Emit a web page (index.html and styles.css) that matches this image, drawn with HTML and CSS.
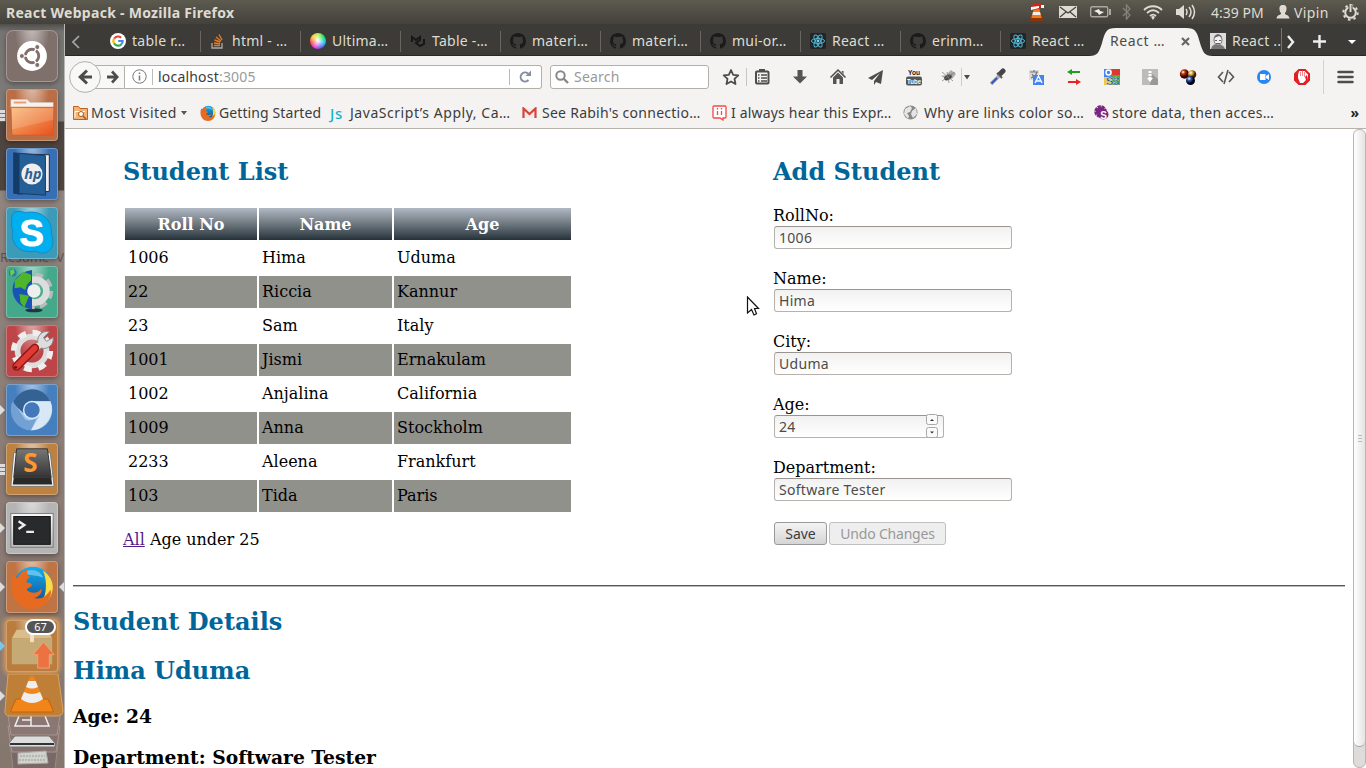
FILE: index.html
```html
<!DOCTYPE html>
<html lang="en">
<head>
<meta charset="utf-8">
<title>React Webpack</title>
<link rel="stylesheet" href="styles.css">
</head>
<body>
<svg class="defs" width="0" height="0" aria-hidden="true">
  <defs>
    <linearGradient id="orange" x1="0" y1="0" x2="1" y2="1"><stop offset="0" stop-color="#f8bb78"/><stop offset="1" stop-color="#e8501c"/></linearGradient>
    <linearGradient id="silver" x1="0" y1="0" x2="0" y2="1"><stop offset="0" stop-color="#fff"/><stop offset="1" stop-color="#bbb"/></linearGradient>
    <linearGradient id="key" x1="0" y1="0" x2="0" y2="1"><stop offset="0" stop-color="#777"/><stop offset="1" stop-color="#333"/></linearGradient>
    <linearGradient id="blue" x1="0" y1="0" x2="0" y2="1"><stop offset="0" stop-color="#14aef0"/><stop offset="1" stop-color="#114a8d"/></linearGradient>
    <radialGradient id="ballred" cx=".35" cy=".3"><stop offset="0" stop-color="#fff"/><stop offset=".4" stop-color="#c43a10"/><stop offset="1" stop-color="#300"/></radialGradient>
    <radialGradient id="ballblue" cx=".35" cy=".3"><stop offset="0" stop-color="#fff"/><stop offset=".4" stop-color="#3861b8"/><stop offset="1" stop-color="#001"/></radialGradient>
    <radialGradient id="ballgold" cx=".35" cy=".3"><stop offset="0" stop-color="#fff"/><stop offset=".4" stop-color="#edb23b"/><stop offset="1" stop-color="#420"/></radialGradient>
    <symbol id="github" viewBox="0 0 16 16"><path fill="#1b1b1b" d="M8 0C3.58 0 0 3.58 0 8c0 3.54 2.29 6.53 5.47 7.59.4.07.55-.17.55-.38v-1.49c-2.01.37-2.53-.49-2.69-.94-.09-.23-.48-.94-.82-1.13-.28-.15-.68-.52-.01-.53.63-.01 1.08.58 1.23.82.72 1.21 1.87.87 2.33.66.07-.52.28-.87.51-1.07-1.78-.2-3.64-.89-3.64-3.95 0-.87.31-1.59.82-2.15-.08-.2-.36-1.02.08-2.12 0 0 .67-.21 2.2.82a7.6 7.6 0 0 1 4 0c1.53-1.04 2.2-.82 2.2-.82.44 1.1.16 1.92.08 2.12.51.56.82 1.27.82 2.15 0 3.07-1.87 3.75-3.65 3.95.29.25.54.73.54 1.48v2.2c0 .21.15.46.55.38A8 8 0 0 0 16 8c0-4.42-3.58-8-8-8z"/></symbol>
    <symbol id="react" viewBox="0 0 16 16"><rect width="16" height="16" rx="2" fill="#222528"/><g fill="none" stroke="#53b4cf"><ellipse cx="8" cy="8" rx="6.6" ry="2.5"/><ellipse cx="8" cy="8" rx="6.6" ry="2.5" transform="rotate(60 8 8)"/><ellipse cx="8" cy="8" rx="6.6" ry="2.5" transform="rotate(120 8 8)"/></g><circle cx="8" cy="8" r="1.4" fill="#61dafb"/></symbol>
    <symbol id="firefox" viewBox="0 0 48 48"><circle cx="25" cy="23" r="21" fill="url(#blue)"/><path fill="#5fc1ed" d="M14 8c9-5 20-2 22 6-7-4-15-1-22-6z"/><path fill="#f7dc45" d="M36 6c9 6 12 15 10 23-2 9-9 15-15 17 8-10 11-24 5-40z"/><path fill="#e66a20" d="M4 10c2 2 3 4 4 5 2-5 6-8 11-10-1 4 0 7 3 8-3 2-4 4-4 6 3 0 6 1 6 3-1 2-5 3-6 5 5 5 13 4 16-1 2 5-4 9-8 10 8 2 14-2 18-9 3 7-6 21-20 21C4 48-3 25 4 10z"/></symbol>
  </defs>
</svg>

<div class="desktop">
  <header class="panel">
    <div class="panel-title">React Webpack - Mozilla Firefox</div>
    <div class="tray">
      <svg class="t-vlc" width="18" height="20" viewBox="0 0 18 20"><path fill="#f57a16" d="M6 6h5l3 11H3z"/><path fill="#eee" d="M5 10h7l.6 3H4.400z"/><path fill="#8a3409" d="M2 16h13v3H2z"/><path fill="#d9211a" d="M3 5C5 0 12-1 15 4l-3 1-1 2-7 1z"/><path fill="#fff" d="M3 5l8-1v2l-8 2zm10-2h3v3h-3z"/></svg>
      <svg class="t-mail" width="18" height="12" viewBox="0 0 18 12"><path fill="#dfdbd2" d="M0 0h18v12H0z"/><path fill="none" stroke="#45433e" stroke-width="1.2" d="M1 1l8 6 8-6M1 11l6-5M17 11l-6-5"/></svg>
      <svg class="t-bat" width="21" height="12" viewBox="0 0 21 12"><rect x=".7" y=".7" width="17" height="10" rx="1.5" fill="none" stroke="#aaa79f" stroke-width="1.4"/><path fill="#aaa79f" d="M19 3h2v6h-2z"/><path fill="#eee" d="M4 5l5-2 1 2 4 1-5 3-1-2z"/></svg>
      <svg class="t-bt" width="9" height="16" viewBox="0 0 9 16"><path fill="none" stroke="#85827b" stroke-width="1.3" d="M1 4l7 7-3.5 4V1L8 5l-7 7"/></svg>
      <svg class="t-wifi" width="20" height="15" viewBox="0 0 20 15"><g fill="none" stroke="#dfdbd2" stroke-width="1.8"><path d="M1 5c5-5 13-5 18 0M4 8c4-3.700 8-3.700 12 0M7 11c2-1.800 4-1.800 6 0"/></g><path fill="#dfdbd2" d="M8 12q2-2 4 0l-2 3z"/></svg>
      <svg class="t-vol" width="20" height="16" viewBox="0 0 20 16"><path fill="#dfdbd2" d="M0 5h3l5-4v14l-5-4H0z"/><g fill="none" stroke="#dfdbd2" stroke-width="1.5"><path d="M10 5q2 3 0 6M13 3q4 5 0 10M16 1q5 7 0 14"/></g></svg>
      <span class="clock">4:39 PM</span>
      <svg class="t-user" width="14" height="14" viewBox="0 0 14 14"><path fill="#dfdbd2" d="M7 0c3 0 4 2 3.400 5-.3 2-1 2-1.400 3v1c1 1 4 1 4.500 4.500H.5C1 10 4 10 5 9V8C4.500 7 3.900 7 3.600 5 3 2 4 0 7 0z"/></svg>
      <span class="user">Vipin</span>
      <svg class="t-gear" width="17" height="17" viewBox="0 0 17 17"><circle cx="8.500" cy="8.500" r="5.300" fill="none" stroke="#dfdbd2" stroke-width="2"/><circle cx="8.500" cy="8.500" r="7.200" fill="none" stroke="#dfdbd2" stroke-width="2" stroke-dasharray="2.500 3.150"/><path stroke="#474540" stroke-width="4" d="M8.500 1v7"/><path stroke="#dfdbd2" stroke-width="2" d="M8.500 0v8"/></svg>
    </div>
  </header>

  <div class="workspace">
    <aside class="launcher">
      <div class="ghost"><span>Resume</span><span>V</span></div>
      <div class="tile ubuntu"><svg viewBox="0 0 52 52"><circle cx="26" cy="26" r="15.500" fill="#fff"/><circle cx="26" cy="26" r="7" fill="none" stroke="#80706b" stroke-width="3"/><path stroke="#fff" stroke-width="1.500" d="M26 26H16m10 0l5-9m-5 9l5 9"/><circle cx="26" cy="26" r="5" fill="#fff"/><g fill="#80706b" stroke="#fff"><circle cx="15.500" cy="26" r="2.600"/><circle cx="31.500" cy="16.700" r="2.600"/><circle cx="31.500" cy="35.300" r="2.600"/></g></svg></div>
      <div class="tile files"><i class="pips"></i><svg viewBox="0 0 52 52"><path fill="#f7f2ee" stroke="#ccc" stroke-width=".5" d="M4 10h17l3 3h24v6H4z"/><path fill="#f29a67" d="M7 12h13v2H7z"/><path fill="url(#orange)" stroke="#d65b20" d="M4 18h45l-1 29H5z"/><path fill="#fff" opacity=".15" d="M5 19h43v12L5 41z"/></svg></div>
      <div class="tile hp"><svg viewBox="0 0 52 52"><path fill="#eee" stroke="#1b2938" d="M10 5l34 1v38l-33 3z"/><path fill="#245f98" stroke="#183b64" d="M7 4l33 3v41L7 46z"/><path fill="#143c68" d="M7 4l6 1v42l-6-1z"/><circle cx="26" cy="26" r="11" fill="#eee"/><text x="18" y="31" class="hp-text">hp</text></svg></div>
      <div class="tile skype"><svg viewBox="0 0 52 52"><path fill="#00aff0" stroke="#1687bd" d="M5 13C3 3 12 2 19 5c15-4 29 7 27 22 6 15-5 24-16 18C14 48 3 38 6 23 4 20 4 17 5 13z"/><text x="13" y="39" class="skype-text">S</text></svg></div>
      <div class="tile globe"><svg viewBox="0 0 52 52"><ellipse cx="28" cy="45" rx="9" ry="2" fill="#234"/><circle cx="29" cy="25" r="15" fill="none" stroke="#bbb" stroke-width="8" stroke-dasharray="7 4.780"/><circle cx="29" cy="25" r="12" fill="none" stroke="#ddd" stroke-width="7"/><path fill="#1754b6" d="M26 3C-1 6-1 41 26 44z"/><path fill="#4fb62c" d="M8 14l9-9 8 3v6l-4 4-2 6-5-3-6 1zm5 14l10 2-5 12-4-5z"/><circle cx="28" cy="25" r="7" fill="#eee"/><circle cx="6" cy="6" r="4" fill="#2677bd"/><path fill="#72cb42" d="M3 4l4-2 1 4-4 4z"/></svg></div>
      <div class="tile tools"><svg viewBox="0 0 52 52"><circle cx="26" cy="26" r="15" fill="none" stroke="#ddd" stroke-width="6"/><circle cx="26" cy="26" r="19" fill="none" stroke="#eee" stroke-width="6" stroke-dasharray="8 6.920"/><path fill="#ddd" stroke="#888" d="M28 19l4-2c-1-6 4-13 12-11l-6 6 3 4 7-4c1 8-7 13-12 11l-5 3z"/><path stroke="#8e1612" stroke-width="9" stroke-linecap="round" d="M10 42l19-19"/><path stroke="#df3a33" stroke-width="6" stroke-linecap="round" d="M10 42l19-19"/><circle cx="9" cy="43" r="1.500" fill="#611"/></svg></div>
      <div class="tile chromium"><i class="pip"></i><svg viewBox="0 0 52 52"><circle cx="26" cy="26" r="21" fill="#a6c9eb"/><path fill="#356294" d="M6 19C13 1 37-1 45 17H27l-10 12z"/><path fill="#73a1d3" d="M6 17l13 19c4 2 9 0 12-2l-6 13C5 46 1 26 6 17z"/><path fill="#d8e8f7" d="M27 17h18c6 12-4 30-20 30l9-15z"/><circle cx="26" cy="26" r="9.500" fill="#dcecfb"/><circle cx="26" cy="26" r="8" fill="#4379bb"/></svg></div>
      <div class="tile sublime"><i class="pips"></i><svg viewBox="0 0 52 52"><path fill="#f5f5f5" stroke="#777" d="M7 9h38l4 35H4z"/><path fill="#292929" d="M7 35h39l1 7H6z"/><path fill="url(#key)" stroke="#333" d="M10 5h32l4 30H7z"/><text x="17" y="29" class="sub-text">S</text></svg></div>
      <div class="tile terminal"><i class="pip"></i><svg viewBox="0 0 52 52"><rect x="4" y="11" width="44" height="35" fill="url(#silver)" stroke="#777"/><rect x="7" y="14" width="38" height="29" fill="#282a2b" stroke="#111"/><path stroke="#eee" stroke-width="2.500" fill="none" d="M12 19l6 4-6 4m8 3h8"/></svg></div>
      <div class="tile fox"><i class="pip"></i><i class="pip-right"></i><svg viewBox="0 0 52 52"><use href="#firefox" x="3" y="3" width="46" height="46"/></svg></div>
      <div class="tile updates"><i class="pip pip-blue"></i><span class="count">67</span><svg viewBox="0 0 52 52"><path fill="#d9be8c" d="M10 9h32l5 9H5z"/><path fill="#c6aa76" d="M5 18h42v27H5z"/><path fill="#eee2c7" d="M24 9h4v13h-4z"/><path fill="#ec7242" stroke="#f5a072" d="M38 22l11 13h-5v14H32V35h-5z"/></svg></div>
      <div class="stack"><i class="pip"></i><svg viewBox="0 0 60 96" width="60" height="96"><path fill="#796865" stroke="#9b8a84" d="M5 60h50l-4 35H9z"/><path fill="#85716d" stroke="#a69691" d="M4 52h52l-4 26H8z"/><path fill="#8a7672" stroke="#a69691" d="M3 35h54l-4 26H7z"/><path fill="none" stroke="#eee" stroke-width="1.500" d="M15 42l-4 10h34l-4-10M27 42v10M18 46h9"/><path fill="#ddd" stroke="#777" d="M11 62h34l6 7v4H5v-4z"/><path fill="#333" d="M6 69h44v2H6z"/><path fill="#d2d2cc" stroke="#aaa" d="M14 79l28-2 2 12-30 1z"/><path stroke="#999" stroke-dasharray="2 1" d="M16 82h25M15 86h27"/><path fill="#c07f37" stroke="#dca361" d="M4 0h50l5 36q0 6-6 6H6q-6 0-5-6z"/><path fill="#f18518" stroke="#c95e06" d="M12 25h32l5 11v2H7v-2z"/><path fill="#f18620" d="M26 3q2-1 4 0l10 24q-12 8-24 0z"/><path fill="#eee" d="M24.300 7h7.400l2.300 6q-6 3-12 0zM20 18q8 4 16 0l3 7q-11 8-22 0z"/></svg></div>
    </aside>

    <section class="browser">
      <div class="tabstrip">
        <div class="tab-prev"><svg width="8" height="14" viewBox="0 0 8 14"><path fill="none" stroke="#aaa" stroke-width="1.600" d="M7 1L1 7l6 6"/></svg></div>
        <div class="tab"><svg width="16" height="16" viewBox="0 0 16 16"><circle cx="8" cy="8" r="8" fill="#fff"/><g fill="none" stroke-width="2.100"><path stroke="#ea4335" d="M4.200 5.600A4.700 4.700 0 0 1 11.200 4.700"/><path stroke="#fbbc05" d="M4.100 10.500a4.700 4.700 0 0 1 0-5"/><path stroke="#34a853" d="M11.300 11.400a4.700 4.700 0 0 1-7.200-1"/><path stroke="#4285f4" d="M8.200 8h4.500a4.700 4.700 0 0 1-1.600 3.500"/></g></svg><span>table r…</span></div>
        <div class="tab"><svg width="16" height="16" viewBox="0 0 16 16"><path fill="none" stroke="#aaa" stroke-width="1.300" d="M2 10v5h10v-5"/><path fill="none" stroke="#e87922" stroke-width="1.400" d="M4 12.500h6M4 10l6 .7M4.500 7l5.800 2M6 4l5 4M9 1.500l3 5.500"/></svg><span>html - …</span></div>
        <div class="tab"><i class="wheel"></i><span>Ultima…</span></div>
        <div class="tab"><svg width="16" height="16" viewBox="0 0 16 16"><path fill="none" stroke="#171717" stroke-width="2" d="M2 9V4l4 3 4-3v3l-4 3 4 3 4-2V6"/></svg><span>Table -…</span></div>
        <div class="tab"><svg width="16" height="16"><use href="#github"/></svg><span>materi…</span></div>
        <div class="tab"><svg width="16" height="16"><use href="#github"/></svg><span>materi…</span></div>
        <div class="tab"><svg width="16" height="16"><use href="#github"/></svg><span>mui-or…</span></div>
        <div class="tab"><svg width="16" height="16"><use href="#react"/></svg><span>React …</span></div>
        <div class="tab"><svg width="16" height="16"><use href="#github"/></svg><span>erinm…</span></div>
        <div class="tab no-line"><svg width="16" height="16"><use href="#react"/></svg><span>React …</span></div>
        <div class="tab active"><svg class="tab-shape" width="124" height="29" viewBox="0 0 124 29"><path fill="#f4f3f2" d="M0 29c9 0 10-4 13-13C16 5 17 1 27 1h70c10 0 11 4 14 15 3 9 4 13 13 13z"/></svg><span>React …</span><svg class="close" width="9" height="9" viewBox="0 0 9 9"><path stroke="#666" stroke-width="2.200" d="M1 1l7 7M8 1L1 8"/></svg></div>
        <div class="tab last"><svg width="16" height="16" viewBox="0 0 16 16"><path fill="#ddd" d="M0 0h16v16H0z"/><path fill="#777" d="M1 16c1-4 4-5 6-5s7 1 8 5z"/><ellipse cx="8" cy="7" rx="4" ry="5" fill="#f1f1f1" stroke="#777"/><path fill="#666" d="M4 5c1-5 7-5 8 0L9 3zM5 7h2v1H5zm4 0h2v1H9zM6 10h4v1H6z"/></svg><span>React ..</span></div>
        <div class="tab-tools"><svg width="85" height="32" viewBox="0 0 85 32"><path stroke="#77746d" d="M.5 4v24"/><path fill="none" stroke="#eee" stroke-width="2.400" d="M7 12l5 6-5 6M32 17.500h13M38.500 11v13"/><path fill="#fff" d="M67 16h8l-4 4z"/></svg></div>
      </div>

      <div class="navbar">
        <svg class="back" width="61" height="32" viewBox="0 0 61 32"><path fill="#f8f8f7" stroke="#b3b0aa" d="M26 4.500h29.500v23H26"/><circle cx="16" cy="16" r="15.400" fill="#f8f8f7" stroke="#b3b0aa"/><path fill="#4c4c4c" d="M9 16l8-7.500 2 2-4 4h8v3h-8l4 4-2 2zM50 16l-6-6.500-2 2 3 3h-7v3h7l-3 3 2 2z"/></svg>
        <div class="url"><svg width="15" height="15" viewBox="0 0 15 15"><circle cx="7.500" cy="7.500" r="6.700" fill="none" stroke="#777"/><path stroke="#777" stroke-width="1.500" d="M7.500 6.500v5M7.500 3.500V5"/></svg><i></i><span>localhost<em>:3005</em></span><svg class="reload" width="32" height="18" viewBox="0 0 32 18"><path stroke="#bbb" d="M.5 1v16"/><path fill="none" stroke="#84909f" stroke-width="2" d="M19.500 12A4.500 4.500 0 1 1 19 5.500"/><path fill="#84909f" d="M16.500 8H22V2.500z"/></svg></div>
        <div class="search"><svg width="14" height="14" viewBox="0 0 14 14"><circle cx="5.500" cy="5.500" r="4.200" fill="none" stroke="#888" stroke-width="2"/><path stroke="#888" stroke-width="2.400" d="M8.500 8.500l4.500 4.500"/></svg><span>Search</span></div>
        <div class="tool star"><svg viewBox="0 0 18 18"><path fill="none" stroke="#4c4c4c" stroke-width="1.800" stroke-linejoin="round" d="M9 2l2.200 4.800 5.100.6-3.800 3.500 1 5.100L9 13.500 4.500 16l1-5.100-3.800-3.500 5.100-.6z"/></svg></div>
        <div class="tool list"><svg viewBox="0 0 18 18"><path fill="#4c4c4c" d="M6 1h6v3H6z"/><rect x="3" y="3.500" width="12.500" height="12" rx="1" fill="none" stroke="#4c4c4c" stroke-width="2"/><path stroke="#4c4c4c" stroke-width="1.500" d="M5 7h1.500M8 7h6M5 10h1.500M8 10h6M5 13h1.500M8 13h6"/></svg></div>
        <div class="tool"><svg viewBox="0 0 18 18"><path fill="#555" d="M6.500 2h5v6.500H16L9 15.500 2 8.500h4.500z"/></svg></div>
        <div class="tool"><svg viewBox="0 0 18 18"><path fill="none" stroke="#4c4c4c" stroke-width="1.500" d="M1.500 9.500L9 2l7.500 7.500"/><path fill="#555" d="M4 9.500l5-5 5 5V16h-3.500v-5h-3v5H4zM12.500 3h2v4z"/></svg></div>
        <div class="tool"><svg viewBox="0 0 18 18"><path fill="#4c4c4c" d="M16 2L1 10l4 2 8-7-6 8v4l2-3 5 2z"/></svg></div>
        <div class="tool"><svg viewBox="0 0 18 18"><rect x="1" y="8.500" width="16" height="9" rx="2" fill="#555"/><text x="3" y="7" textLength="12" lengthAdjust="spacingAndGlyphs" class="yt-you">You</text><text x="2" y="16" textLength="14" lengthAdjust="spacingAndGlyphs" class="yt-tube">Tube</text></svg></div>
        <div class="tool bug"><svg viewBox="0 0 32 18"><path fill="#aaa" d="M6 7l5-5 5 4-4 5zM1 8l6-1 1 5z"/><ellipse cx="8" cy="9.500" rx="4" ry="2.500" fill="#444" transform="rotate(-25 8 9.500)"/><path stroke="#777" stroke-width=".7" d="M2 4l11 9M2 13l13-9M7 4l2 11"/><path stroke="#ccc" d="M21.500 0v18"/><path fill="#4c4c4c" d="M24 7h6l-3 4.500z"/></svg></div>
        <div class="tool"><svg viewBox="0 0 18 18"><path stroke="#444" stroke-width="5" stroke-linecap="round" d="M11 6l3-3"/><path stroke="#555" stroke-width="2" d="M8 5l5 5"/><path stroke="#aaa" stroke-width="3.500" d="M10 8l-8 8"/><path stroke="#2d55d7" stroke-width="2" d="M8 10l-5.500 5.500"/></svg></div>
        <div class="tool"><svg viewBox="0 0 18 18"><path fill="#ddd" d="M2 2h10v10H2z"/><path fill="none" stroke="#777" stroke-width="1.200" d="M3 4h8M7 2v2M4 10q5-2 6-6M5 6q2 4 5 4"/><path fill="#4584ee" d="M6 7h11v10H6z"/><path fill="none" stroke="#fff" stroke-width="1.300" d="M8 15l3.500-7 3.500 7M9 13h5"/></svg></div>
        <div class="tool"><svg viewBox="0 0 18 18"><path fill="#1aa316" d="M2 4l5-3v2h8v2H7v2z"/><path fill="#ed2024" d="M16 14l-5-3v2H3v2h8v2z"/></svg></div>
        <div class="tool"><svg viewBox="0 0 18 18"><path fill="#4285f4" d="M1 1h8v8H1z"/><path fill="#de3831" d="M9 1h8v6H9z"/><path fill="#4aac48" d="M9 7h8v10H9z"/><path fill="#e9cb3d" d="M1 9h8v8H1z"/><circle cx="5.500" cy="4.500" r="2.500" fill="none" stroke="#fff" stroke-width="1.500"/><text x="3" y="16.500" class="s3">S3</text></svg></div>
        <div class="tool"><svg viewBox="0 0 18 18"><path fill="#bbb" d="M1 1h16v16H1z"/><path fill="#999" d="M11 6l6 5v6H9z"/><path stroke="#fff" stroke-width="3" stroke-dasharray="2 1" d="M9 3v7"/><path fill="#fff" d="M6 10h6l-3 4z"/></svg></div>
        <div class="tool"><svg viewBox="0 0 18 18"><circle cx="5.500" cy="6" r="4.700" fill="url(#ballred)"/><circle cx="13" cy="6.500" r="4.300" fill="url(#ballgold)"/><circle cx="11.500" cy="12.500" r="4.500" fill="url(#ballblue)"/></svg></div>
        <div class="tool"><svg viewBox="0 0 18 18"><path fill="none" stroke="#555" stroke-width="1.600" d="M6 4L1.500 9 6 14M12 4l4.500 5-4.500 5M11 2L7 16"/></svg></div>
        <div class="tool"><svg viewBox="0 0 18 18"><circle cx="9" cy="9" r="7" fill="#2787f4"/><path fill="#fff" d="M5 6h5.500v6H5zM11 8l3-2v6l-3-2z"/></svg></div>
        <div class="tool"><svg viewBox="0 0 18 18"><path fill="#fff" stroke="#e31b23" stroke-width="2" d="M6 2h6l4 4v6l-4 4H6l-4-4V6z"/><path fill="#e31b23" d="M6 3L3 6v6l3 3h1l-2-5V7zM14 7l-2 2 1 3-3 3h2l3-3z"/><path stroke="#e31b23" stroke-width=".5" d="M7.500 4v4M9.500 3v5M11.500 4v5"/></svg></div>
        <div class="menu"><svg width="17" height="14" viewBox="0 0 17 14"><path stroke="#4c4c4c" stroke-width="2.500" stroke-linecap="round" d="M1.500 2h14M1.500 7h14M1.500 12h14"/></svg></div>
      </div>

      <nav class="bookmarks">
        <div class="bm b1"><svg width="15" height="16" viewBox="0 0 15 16"><path fill="#f3b276" stroke="#bb6521" d="M.5 14.500v-13h5l1.500 2h7.500v11z"/><path fill="none" stroke="#fff" d="M2 12.500v-6h10"/><circle cx="8" cy="9" r="2.500" fill="#fff" stroke="#a95816"/><path stroke="#a95816" stroke-width="1.500" d="M10 11l3 3"/></svg><span>Most Visited</span><i class="drop"></i></div>
        <div class="bm b2"><svg width="16" height="16"><use href="#firefox"/></svg><span>Getting Started</span></div>
        <div class="bm b3"><b class="js">Js</b><span>JavaScript’s Apply, Ca…</span></div>
        <div class="bm b4"><svg width="15" height="12" viewBox="0 0 15 12"><path fill="#eee" d="M1 1h13v10H1z"/><path fill="none" stroke="#d64537" stroke-width="2.200" d="M1.500 11V1.500L7.500 7l6-5.500V11"/></svg><span>See Rabih's connectio…</span></div>
        <div class="bm b5"><svg width="15" height="16" viewBox="0 0 15 16"><path fill="#fff" stroke="#f04a48" stroke-width="1.300" d="M2 1h11q1 0 1 1v10q0 1-1 1h-2v2l-3-2H2q-1 0-1-1V2q0-1 1-1z"/><path stroke="#f04a48" stroke-width="1.300" d="M5.500 6v4M9.500 6v4M5.500 3v1.500M9.500 3v1.500"/></svg><span>I always hear this Expr…</span></div>
        <div class="bm b6"><svg width="15" height="15" viewBox="0 0 15 15"><circle cx="7.500" cy="7.500" r="7" fill="#888"/><path fill="#e5e5e5" d="M2 4l5-3 2 2-2 4-3 1 2 3-1 3-4-5zM9 6l4-3 1 6-4 4-2-4z"/></svg><span>Why are links color so…</span></div>
        <div class="bm b7"><svg width="15" height="15" viewBox="0 0 15 15"><circle cx="6.500" cy="6.500" r="4.500" fill="#782880" stroke="#782880" stroke-width="3.500" stroke-dasharray="3 .6"/><circle cx="9.500" cy="9.500" r="5" fill="#782880"/><text x="6.300" y="14" class="purple-s">S</text></svg><span>store data, then acces…</span></div>
        <span class="more">»</span>
      </nav>

      <div class="viewport">
        <main class="page">
          <div class="columns">
            <section class="students">
              <h2>Student List</h2>
              <table>
                <thead><tr><th>Roll No</th><th>Name</th><th>Age</th></tr></thead>
                <tbody>
                <tr><td>1006</td><td>Hima</td><td>Uduma</td></tr>
                <tr><td>22</td><td>Riccia</td><td>Kannur</td></tr>
                <tr><td>23</td><td>Sam</td><td>Italy</td></tr>
                <tr><td>1001</td><td>Jismi</td><td>Ernakulam</td></tr>
                <tr><td>1002</td><td>Anjalina</td><td>California</td></tr>
                <tr><td>1009</td><td>Anna</td><td>Stockholm</td></tr>
                <tr><td>2233</td><td>Aleena</td><td>Frankfurt</td></tr>
                <tr><td>103</td><td>Tida</td><td>Paris</td></tr>
                </tbody>
              </table>
              <p class="filter"><a href="#">All</a> Age under 25</p>
            </section>
            <section class="editor">
              <h2>Add Student</h2>
              <div class="field"><label>RollNo:</label><div class="input">1006</div></div>
              <div class="field"><label>Name:</label><div class="input">Hima</div></div>
              <div class="field"><label>City:</label><div class="input">Uduma</div></div>
              <div class="field"><label>Age:</label><div class="input number">24<svg class="spin" width="13" height="25" viewBox="0 0 13 25"><g fill="#fafafa" stroke="#aaa7a2"><rect x=".5" y=".5" width="11" height="10" rx="2"/><rect x=".5" y="13.500" width="11" height="10" rx="2"/></g><path fill="#333" d="M4 7h4L6 5zM4 17.500h4l-2 2z"/></svg></div></div>
              <div class="field"><label>Department:</label><div class="input">Software Tester</div></div>
              <div class="buttons"><button class="save">Save</button><button class="undo" disabled>Undo Changes</button></div>
            </section>
          </div>
          <hr>
          <section class="details">
            <h2>Student Details</h2>
            <h2>Hima Uduma</h2>
            <h3>Age: 24</h3>
            <h3>Department: Software Tester</h3>
          </section>
        </main>
        <div class="scrollbar"><div class="thumb"><i></i></div></div>
      </div>
    </section>
  </div>
  <svg class="cursor" width="14" height="22" viewBox="0 0 14 22"><path fill="#fff" stroke="#111" stroke-width="1.200" d="M1.500 1v16l4-3.500 2.500 5.500 2.500-1.300L8.500 12.500h4z"/></svg>
</div>
</body>
</html>
```
FILE: styles.css
```css
* { box-sizing: border-box; }
body { margin: 0; overflow: hidden; font-family: "Noto Sans", sans-serif; font-size: 14px; color: #3c3c3c; }
svg { display: block; flex: none; }
.defs { position: absolute; }
.desktop { width: 1366px; height: 768px; display: flex; flex-direction: column; overflow: hidden; position: relative; }
.panel { height: 24px; flex: none; display: flex; align-items: center; padding-left: 6px; background: linear-gradient(#5d5a4f, #43413c); color: #dfdbd2; }
.panel-title { font-weight: bold; font-size: 14px; letter-spacing: .28px; flex: 1; white-space: nowrap; }
.tray { width: 338px; display: flex; align-items: center; font-size: 14px; white-space: nowrap; }
.t-mail { margin-left: 13px; }
.t-bat { margin-left: 13px; }
.t-bt { margin-left: 11px; }
.t-wifi { margin-left: 12px; }
.t-vol { margin-left: 13px; }
.clock { margin-left: 15px; width: 53px; }
.t-user { margin-left: 12px; }
.user { margin-left: 4px; width: 36px; letter-spacing: .4px; }
.t-gear { margin-left: 12px; }
.workspace { display: flex; flex: 1; min-height: 0; }

.launcher { width: 65px; flex: none; padding: 6px 0 0 6px; display: flex; flex-direction: column; gap: 7px; position: relative; overflow: hidden; border-right: 1px solid #b9b7b4; background: linear-gradient(#504e4b 0, #777573 8px, #7f7c79 97px, #4f4541 98px, #51453f 166px, #91857f 167px, #8c7c75 60%, #85766e 100%); }
.ghost { position: absolute; left: 0; top: 224px; width: 64px; display: flex; justify-content: space-between; color: #5d5653; font-size: 13px; }
.tile { width: 52px; height: 52px; flex: none; position: relative; border-radius: 4px; border: 1px solid rgba(255,255,255,.28); box-shadow: 0 2px 5px rgba(0,0,0,.35); }
.tile > svg { width: 50px; height: 50px; position: relative; }
.tile::before { content: ""; position: absolute; inset: 0; border-radius: 4px; background: radial-gradient(ellipse at 50% -15%, rgba(255,255,255,.6), rgba(255,255,255,0) 50%); }
.ubuntu { background: #80706b; border-radius: 7px; }
.files { background: #b96e46; }
.hp { background: #376fb6; }
.skype { background: #3d9bba; }
.globe { background: #43a98a; }
.tools { background: #be4547; }
.chromium { background: #467fbd; }
.sublime { background: #bd8141; }
.terminal { background: #b4b4b4; }
.fox { background: #bf7444; }
.updates { background: #ba7d3e; box-shadow: 0 0 5px 2px #e09b52; }
.hp-text { font: italic bold 15px "Noto Sans", sans-serif; fill: #315f90; }
.skype-text { font: bold 38px "Liberation Sans", sans-serif; fill: #fff; stroke: #fff; }
.sub-text { font: bold 27px "Noto Sans", sans-serif; fill: #ff982c; }
.pip, .pip-right, .pips { position: absolute; top: 20px; width: 0; height: 0; border: 5px solid transparent; }
.pip { left: -7px; border-left-color: #ddd; border-right: 0; }
.pip-right { right: -7px; border-right-color: #ddd; border-left: 0; }
.pip-blue { border-left-color: #79c6ed; }
.pips { left: -7px; width: 5px; height: 12px; border: 0; background: repeating-linear-gradient(#ddd 0 3px, transparent 3px 4px); }
.count { position: absolute; z-index: 2; left: 18px; top: -2px; width: 31px; height: 16px; border: 2px solid #fff; border-radius: 8px; background: #555; color: #fff; font-size: 11px; line-height: 12px; text-align: center; }
.stack { position: relative; width: 56px; height: 96px; flex: none; margin: -5px 0 0 -2px; }
.stack .pip { left: -4px; top: 17px; }

.browser { flex: 1; min-width: 0; display: flex; flex-direction: column; }
.tabstrip { height: 32px; flex: none; display: flex; background: #3c3b37; border-bottom: 1px solid #292825; color: #dfdbd2; }
.tab-prev { width: 36px; padding: 11px 0 0 7px; }
.tab { width: 100px; flex: none; display: flex; align-items: center; padding: 2px 0 0 9px; gap: 6px; white-space: nowrap; letter-spacing: .25px; position: relative; }
.tab::after { content: ""; position: absolute; right: 0; top: 7px; width: 1px; height: 21px; background: #69675f; }
.tab.no-line::after, .tab.active::after, .tab.last::after { display: none; }
.tab span { position: relative; line-height: 20px; }
.active { color: #4c4c4c; z-index: 2; }
.active span { letter-spacing: .6px; }
.tab-shape { position: absolute; left: -12px; top: 3px; }
.close { position: relative; margin-left: 10px; top: 1px; }
.last { width: 80px; }
.wheel { width: 16px; height: 16px; border-radius: 50%; background: radial-gradient(#fff, transparent 70%), conic-gradient(#b8f03b, #00dc55, #00b9e6, #524cf8, #e52dd0, #fa3947, #ffc52c, #b8f03b); }
.navbar { height: 41px; flex: none; display: flex; align-items: center; background: #f4f3f2; padding-left: 4px; }
.back { position: relative; z-index: 1; }
.url { width: 417px; height: 24px; margin-left: -5px; border: 1px solid #b3b0aa; border-left: 0; border-radius: 0 3px 3px 0; background: #fff; display: flex; align-items: center; padding-left: 7px; }
.url i { width: 1px; height: 16px; background: #bbb; margin: 0 5px 0 5px; }
.url em { font-style: normal; color: #9b9b9b; }
.url span { letter-spacing: .2px; }
.reload { margin-left: auto; }
.search { width: 159px; height: 24px; margin-left: 8px; border: 1px solid #b3b0aa; border-radius: 3px; background: #fff; display: flex; align-items: center; padding-left: 4px; gap: 5px; color: #999; letter-spacing: .2px; }
.tool { width: 38px; flex: none; display: flex; justify-content: center; position: relative; }
.tool svg { width: 18px; height: 18px; }
.star { width: 24px; margin-left: 10px; }
.list::before { content: ""; position: absolute; left: 3px; width: 1px; height: 18px; background: #c8c5c0; }
.bug { width: 46px; }
.bug svg { width: 32px; }
.yt-you { font: bold 8px "Liberation Sans", sans-serif; fill: #222; }
.yt-tube { font: bold 8px "Liberation Sans", sans-serif; fill: #fff; }
.s3 { font: bold 11px "Liberation Sans", sans-serif; fill: #113b8c; stroke: #fff; stroke-width: .3px; }
.menu { border-left: 1px solid #d3d1cd; height: 34px; display: flex; align-items: center; padding-left: 13px; margin-left: 2px; }
.bookmarks { height: 32px; flex: none; display: flex; align-items: center; background: #f4f3f2; border-bottom: 1px solid #b7b3ac; padding-left: 8px; }
.bm { display: flex; align-items: center; flex: none; white-space: nowrap; gap: 3px; letter-spacing: .26px; }
.b1 { width: 127px; letter-spacing: .45px; } .b2 { width: 130px; letter-spacing: .1px; } .b3 { width: 192px; gap: 5px; letter-spacing: .54px; } .b4 { width: 190px; gap: 5px; } .b5 { width: 191px; gap: 4px; letter-spacing: .18px; } .b6 { width: 191px; gap: 6px; } .b7 { width: 200px; letter-spacing: .32px; }
.drop { border: 3px solid transparent; border-top: 4px solid #555; border-bottom: 0; margin-left: 1px; }
.js { color: #15b3cc; font-weight: 500; width: 15px; font-size: 15px; }
.purple-s { font: bold 10px "Liberation Sans", sans-serif; fill: #fff; }
.more { margin-left: auto; margin-right: 7px; color: #222; font-size: 14px; font-weight: bold; }

.viewport { flex: 1; min-height: 0; display: flex; background: #fff; color: #000; font-family: "DejaVu Serif", serif; font-size: 16px; }
.page { flex: 1; min-width: 0; padding: 8px; overflow: hidden; }
.columns { display: flex; height: 448px; padding: 20px 0 0 50px; }
.students { width: 650px; }
h2 { margin: 0 0 20px; font-size: 24px; line-height: 29px; color: #069; white-space: nowrap; }
.students table { width: 450px; table-layout: fixed; border-spacing: 2px; }
th, td { height: 32px; padding: 0 3px; line-height: 19px; }
th:nth-child(1) { width: 132px; } th:nth-child(2) { width: 133px; }
th { color: #fff; background: linear-gradient(#b0b8c4, #7c858c 40%, #26323a); }
td { text-align: left; padding-bottom: 2px; }
tbody tr:nth-child(even) td { background: #91918c; }
.filter { margin: 16px 0 0; line-height: 19px; }
.filter a { color: #551a8b; }
.field { height: 63px; }
.field label { display: block; line-height: 19px; margin-bottom: 1px; }
.input { width: 238px; height: 23px; margin-left: 1px; position: relative; border: 1px solid #b5b1ad; border-top-color: #99948f; border-radius: 3px; background: linear-gradient(#f1f1f1, #fff); padding-left: 4px; color: #4c4c4c; font: 14px/22px "Noto Sans", sans-serif; letter-spacing: .3px; }
.number { width: 170px; }
.spin { position: absolute; left: 151px; top: -2px; }
.buttons { display: flex; gap: 2px; margin: 1px 0 0 1px; }
button { height: 23px; padding: 0; border: 1px solid #aaa7a3; border-radius: 3px; font: 14px "Noto Sans", sans-serif; color: #3c3c3c; background: linear-gradient(#f4f4f4, #d5d5d5); }
.save { width: 53px; border-color: #999; }
.undo { width: 117px; letter-spacing: -.2px; color: #999; background: #eee; border-color: #c2c0bd; }
hr { margin: 0; border: 0; height: 2px; background: linear-gradient(#555 50%, #bbb 50%); }
.details { padding-top: 20px; }
h3 { margin: 0 0 19px; font-size: 18.720px; line-height: 22px; white-space: nowrap; }
.scrollbar { width: 13px; flex: none; border: 1px solid #b9b6ae; border-radius: 6px; background: #dddcda; }
.thumb { height: 617px; border-bottom: 1px solid #aaa7a0; border-radius: 6px; background: linear-gradient(90deg, #fff, #e5e4e2); display: flex; align-items: center; justify-content: center; }
.thumb i { width: 4px; height: 7px; background: repeating-linear-gradient(#bbb 0 1px, transparent 1px 3px); }
.cursor { position: absolute; left: 746px; top: 296px; }
```
